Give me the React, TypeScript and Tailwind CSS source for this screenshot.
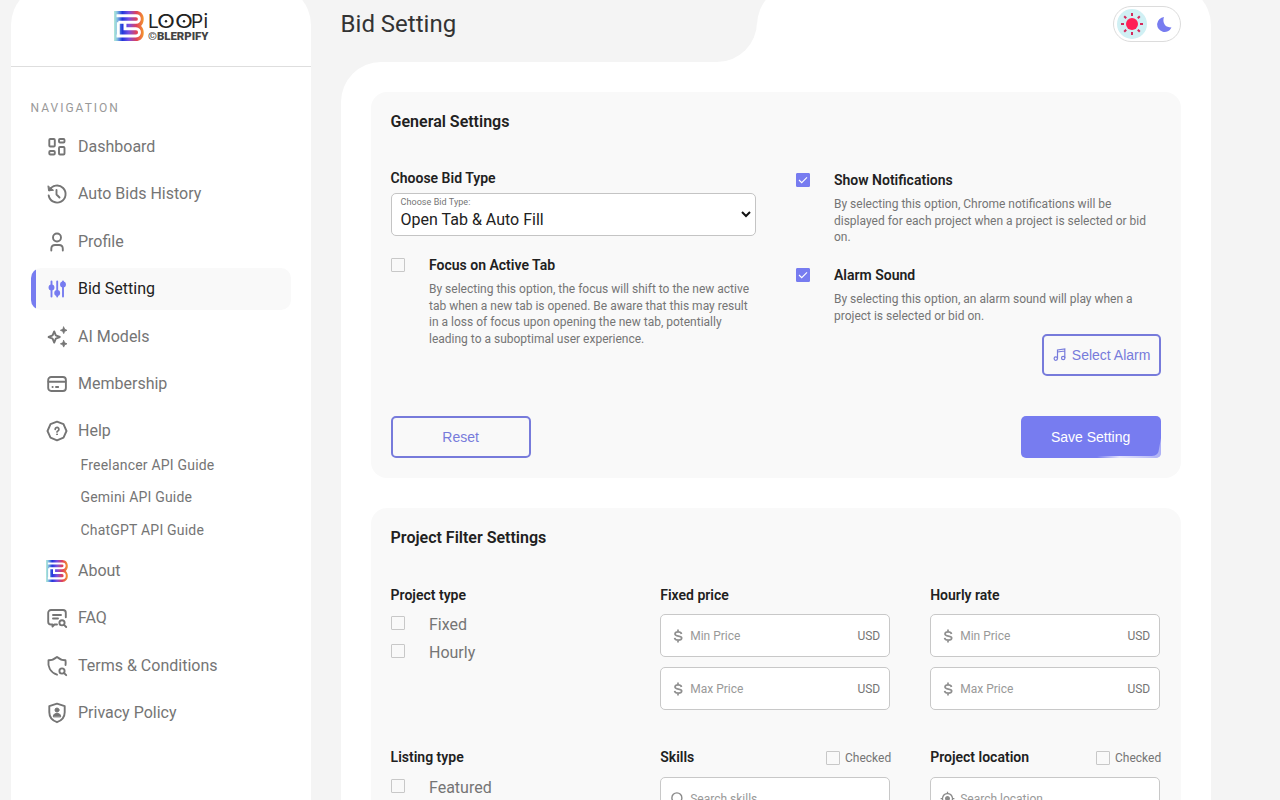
import { useState } from 'react';
import type { ReactNode } from 'react';
import { Search } from 'lucide-react';
import { MdMyLocation } from 'react-icons/md';

const navItems = [
  { label: 'Dashboard', icon: <DashboardIcon /> },
  { label: 'Auto Bids History', icon: <HistoryIcon /> },
  { label: 'Profile', icon: <ProfileIcon /> },
  { label: 'Bid Setting', icon: <SlidersIcon /> },
  { label: 'AI Models', icon: <SparkleIcon /> },
  { label: 'Membership', icon: <CardIcon /> },
  { label: 'Help', icon: <HelpIcon /> },
];

const guides = ['Freelancer API Guide', 'Gemini API Guide', 'ChatGPT API Guide'];

const footerItems = [
  { label: 'About', icon: <BrandMark size={22} id="about" /> },
  { label: 'FAQ', icon: <FaqIcon /> },
  { label: 'Terms & Conditions', icon: <TermsIcon /> },
  { label: 'Privacy Policy', icon: <PrivacyIcon /> },
];

export default function App() {
  const [active, setActive] = useState('Bid Setting');
  const [focusTab, setFocusTab] = useState(false);
  const [notify, setNotify] = useState(true);
  const [alarm, setAlarm] = useState(true);

  return (
    <div className="h-[800px] overflow-hidden bg-[#f4f4f4] font-[Roboto,sans-serif] text-[#757575]">
      <div className="ml-[11px] flex gap-[29.6px]">
        {/* Sidebar */}
        <aside className="-mt-[15px] h-[830px] w-[300px] shrink-0 rounded-t-[40px] bg-white">
          <div className="flex h-[82px] justify-center border-b border-[#dedede] pt-[26px]">
            <Logo />
          </div>
          <p className="mt-[33px] ml-[19.5px] text-xs leading-4 tracking-[2px] text-[#999]">NAVIGATION</p>
          <nav className="mt-[10px] px-5">
            {navItems.map((item) => (
              <NavItem key={item.label} {...item} active={active === item.label} onClick={() => setActive(item.label)} />
            ))}
            <ul className="-mt-[9.3px] mb-[3.8px] pl-[49.5px]">
              {guides.map((guide) => (
                <li key={guide} className="flex h-[32.5px] items-center text-sm tracking-[0.2px]">{guide}</li>
              ))}
            </ul>
            {footerItems.map((item) => (
              <NavItem key={item.label} {...item} active={active === item.label} onClick={() => setActive(item.label)} />
            ))}
          </nav>
        </aside>

        <main className="-mt-[15px] w-[870px] shrink-0">
          <header className="flex h-[77px]">
            <div className="w-[416px] bg-linear-to-r from-transparent from-50% to-white to-50%">
              <div className="flex h-full items-center rounded-br-[40px] bg-[#f4f4f4]">
                <h1 className="text-2xl leading-7 text-[#333]">Bid Setting</h1>
              </div>
            </div>
            <div className="flex flex-1 items-start justify-end rounded-t-[40px] bg-white pt-[21px] pr-[30px]">
              <ThemeSwitch />
            </div>
          </header>

          <div className="flex h-[760px] flex-col gap-[30px] rounded-tl-[40px] bg-white p-[30px]">
            <section className="h-[386px] shrink-0 rounded-2xl bg-[#f9f9f9] p-5">
              <h2 className="text-base leading-5 font-semibold text-[#212121]">General Settings</h2>
              <div className="mt-[36px] grid h-[248px] grid-cols-2 gap-10">
                <div>
                  <h3 className="text-sm leading-5 font-semibold text-[#212121]">Choose Bid Type</h3>
                  <div className="mt-[5px] flex h-[43px] items-center justify-between rounded-[5px] border border-[#c4c4c4] bg-white pr-1 pl-[9px]">
                    <div>
                      <p className="-mt-px text-[9px] leading-[10px] tracking-[0.05px]">Choose Bid Type:</p>
                      <p className="mt-[2px] text-base leading-[22px] text-[#212121]">Open Tab &amp; Auto Fill</p>
                    </div>
                    <svg width="10" height="7" viewBox="0 0 10 7" fill="none" stroke="#111" strokeWidth="2">
                      <path d="M1 1l4 4 4-4" />
                    </svg>
                  </div>
                  <div className="mt-[19px]">
                    <Option title="Focus on Active Tab" checked={focusTab} onChange={setFocusTab}>
                      By selecting this option, the focus will shift to the new active tab when a new tab is opened. Be aware
                      that this may result in a loss of focus upon opening the new tab, potentially leading to a suboptimal
                      user experience.
                    </Option>
                  </div>
                </div>
                <div className="pt-[2px]">
                  <Option title="Show Notifications" checked={notify} onChange={setNotify}>
                    By selecting this option, Chrome notifications will be displayed for each project when a project is
                    selected or bid on.
                  </Option>
                  <div className="mt-[19px]">
                    <Option title="Alarm Sound" checked={alarm} onChange={setAlarm}>
                      By selecting this option, an alarm sound will play when a project is selected or bid on.
                    </Option>
                  </div>
                  <div className="mt-[9.7px] flex justify-end">
                    <button className="flex h-[42px] w-[119px] items-center justify-center gap-[6px] rounded-[5px] border-2 border-[#777bdb] pl-px font-[Liberation_Sans,sans-serif] text-sm text-[#777bdb]">
                      <NotesIcon />
                      Select Alarm
                    </button>
                  </div>
                </div>
              </div>
              <div className="flex justify-between">
                <button className="h-[42px] w-[140px] rounded-[5px] border-2 border-[#777bdb] font-[Liberation_Sans,sans-serif] text-sm text-[#777bdb]">
                  Reset
                </button>
                <button className="relative h-[42px] w-[140px] overflow-hidden rounded-[5px] bg-[#777cf0] font-[Liberation_Sans,sans-serif] text-sm text-white">
                  Save Setting
                  <svg className="absolute right-0 bottom-0" width="64" height="24" viewBox="0 0 64 24">
                    <defs>
                      <linearGradient id="shine" x1="0" x2="1">
                        <stop offset="0" stopColor="#fff" stopOpacity="0" />
                        <stop offset=".35" stopColor="#fff" stopOpacity=".8" />
                        <stop offset="1" stopColor="#fff" stopOpacity=".4" />
                      </linearGradient>
                    </defs>
                    <path d="M0 22h55q6.500 0 7-7L64 4v20H0z" fill="url(#shine)" />
                  </svg>
                </button>
              </div>
            </section>

            <section className="h-[500px] shrink-0 rounded-2xl bg-[#f9f9f9] p-5">
              <h2 className="text-base leading-5 font-semibold text-[#212121]">Project Filter Settings</h2>
              <div className="mt-[37px] -ml-[0.4px] grid w-[770px] grid-cols-3 gap-x-10">
                <div className="h-[162px] pl-[0.4px]">
                  <FieldTitle>Project type</FieldTitle>
                  <div className="mt-2 flex flex-col gap-1">
                    <CheckRow label="Fixed" />
                    <CheckRow label="Hourly" />
                  </div>
                </div>
                <PriceGroup title="Fixed price" />
                <PriceGroup title="Hourly rate" />
                <div className="pl-[0.4px]">
                  <FieldTitle>Listing type</FieldTitle>
                  <div className="mt-[8.6px]">
                    <CheckRow label="Featured" />
                  </div>
                </div>
                <SearchGroup title="Skills" placeholder="Search skills" icon={<Search size={15} strokeWidth={2.2} />} />
                <SearchGroup title="Project location" placeholder="Search location" icon={<MdMyLocation size={15} />} />
              </div>
            </section>
          </div>
        </main>
      </div>
    </div>
  );
}

function NavItem({ label, icon, active, onClick }: { label: string; icon: ReactNode; active: boolean; onClick: () => void }) {
  return (
    <button
      onClick={onClick}
      className={`mb-[5.4px] flex h-[42px] w-full items-center gap-[10px] overflow-hidden rounded-[10px] text-base ${active ? 'bg-[#f9f9f9] text-[#212121]' : 'text-[#757575]'}`}
    >
      <span className={`h-full w-[5px] ${active ? 'bg-[#777cf0]' : ''}`} />
      <span className={`flex size-[22px] items-center justify-center ${active ? 'text-[#777cf0]' : ''}`}>{icon}</span>
      <span>{label}</span>
    </button>
  );
}

function Checkbox({ checked, onClick }: { checked?: boolean; onClick?: () => void }) {
  return (
    <button
      onClick={onClick}
      className={`flex size-[14px] shrink-0 items-center justify-center rounded-[1px] border ${checked ? 'border-[#777cf0] bg-[#777cf0]' : 'border-[#c8c8c8]'}`}
    >
      {checked && (
        <svg width="10" height="10" viewBox="0 0 10 10" fill="none" stroke="white" strokeWidth="1.100" className="shrink-0">
          <path d="M1 5l2.700 2.700L9 2.300" />
        </svg>
      )}
    </button>
  );
}

function Option({ title, checked, onChange, children }: { title: string; checked: boolean; onChange: (v: boolean) => void; children: ReactNode }) {
  return (
    <div className="flex gap-[24.4px]">
      <div className="pt-[3px]">
        <Checkbox checked={checked} onClick={() => onChange(!checked)} />
      </div>
      <div>
        <h3 className="text-sm leading-5 font-semibold text-[#212121]">{title}</h3>
        <p className="mt-[6px] -mr-px text-xs leading-[16.65px]">{children}</p>
      </div>
    </div>
  );
}

function FieldTitle({ children }: { children: ReactNode }) {
  return <h3 className="text-sm leading-5 font-semibold text-[#212121]">{children}</h3>;
}

function CheckRow({ label }: { label: string }) {
  const [checked, setChecked] = useState(false);
  return (
    <div className="flex h-6 gap-[24.4px]">
      <div className="pt-[3px]">
        <Checkbox checked={checked} onClick={() => setChecked(!checked)} />
      </div>
      <span className="text-base leading-6">{label}</span>
    </div>
  );
}

function PriceGroup({ title }: { title: string }) {
  return (
    <div>
      <FieldTitle>{title}</FieldTitle>
      <div className="mt-[9px] flex flex-col gap-[10px]">
        {['Min Price', 'Max Price'].map((placeholder) => (
          <div key={placeholder} className="flex h-[43px] items-center rounded-[5px] border border-[#c8c8c8] bg-white px-[9px]">
            <DollarIcon />
            <input placeholder={placeholder} className="ml-1 w-0 flex-1 text-xs outline-none placeholder:text-[#999]" />
            <span className="text-xs">USD</span>
          </div>
        ))}
      </div>
    </div>
  );
}

function SearchGroup({ title, placeholder, icon }: { title: string; placeholder: string; icon: ReactNode }) {
  return (
    <div>
      <div className="flex items-center justify-between">
        <FieldTitle>{title}</FieldTitle>
        <div className="flex items-center gap-[5px] pt-px">
          <Checkbox />
          <span className="-mr-px text-xs">Checked</span>
        </div>
      </div>
      <div className="mt-[10px] flex h-[43px] items-center rounded-[5px] border border-[#c8c8c8] bg-white px-[9px]">
        <span className="text-[#8a8a8a]">{icon}</span>
        <input placeholder={placeholder} className="ml-[5px] w-0 flex-1 text-xs outline-none placeholder:text-[#999]" />
      </div>
    </div>
  );
}

function ThemeSwitch() {
  return (
    <div className="flex h-9 w-[68px] items-center gap-[10px] rounded-full border border-[#dcdcdc] pl-[3px]">
      <span className="flex size-[30px] items-center justify-center rounded-full bg-[#d0f0f4]">
        <svg width="24" height="24" viewBox="0 0 24 24" stroke="#d42a5c" strokeWidth="2">
          <circle cx="12" cy="12" r="6" fill="#ff2156" stroke="none" />
          <path d="M12 1v3M12 20v3M1 12h3M20 12h3M4.200 4.200l2 2M17.800 17.800l2 2M4.200 19.800l2-2M17.800 6.200l2-2" />
        </svg>
      </span>
      <svg width="15" height="15" viewBox="0 0 15 15" fill="#777cf0">
        <path d="M7 0C5.500 4 6.500 10.500 14.500 10.500A7.500 7.500 0 1 1 7 0z" />
      </svg>
    </div>
  );
}

function Logo() {
  return (
    <svg width="96" height="32" viewBox="0 0 96 32" className="translate-x-px">
      <BrandShape id="logo" />
      <g fill="#222" fontFamily="Inter, sans-serif" fontWeight="400" fontSize="19">
        <text x="34" y="17">L</text>
        <text x="43" y="17" textLength="18" lengthAdjust="spacingAndGlyphs">O</text>
        <text x="61" y="17" textLength="18" lengthAdjust="spacingAndGlyphs">O</text>
        <text x="77" y="17">P</text>
        <text x="89.500" y="17">i</text>
        <circle cx="52" cy="10.200" r="1.200" />
        <circle cx="70" cy="10.200" r="1.200" />
      </g>
      <text x="34" y="28.800" fill="#444" fontFamily="Roboto, sans-serif" fontWeight="900" fontSize="11" textLength="60.500" lengthAdjust="spacingAndGlyphs">
        ©BLERPIFY
      </text>
    </svg>
  );
}

function BrandMark({ size, id }: { size: number; id: string }) {
  return (
    <svg width={size} height={size} viewBox="0 0 30 30">
      <BrandShape id={id} />
    </svg>
  );
}

function BrandShape({ id }: { id: string }) {
  return (
    <g>
      <defs>
        <linearGradient id={id} x1="0" x2="1">
          <stop offset="0" stopColor="#b4ead8" />
          <stop offset=".1" stopColor="#86c4e0" />
          <stop offset=".28" stopColor="#2038dc" />
          <stop offset=".5" stopColor="#7a4fe0" />
          <stop offset=".75" stopColor="#e0405a" />
          <stop offset="1" stopColor="#f59a2c" />
        </linearGradient>
      </defs>
      <path d="M0 0h22c9 0 9.500 11 5 15 4.500 4 4 15-5 15H0z" fill={`url(#${id})`} />
      <path
        d="M2.500 4.700H22c4.500 0 4.500 6.600 0 6.600H4.300M2.500 25H22c4.700 0 4.700-7.300 0-7.300H11V11.300M4.300 11.300V25"
        fill="none"
        stroke="#fff"
        strokeWidth="2.900"
      />
    </g>
  );
}

function Icon({ children }: { children: ReactNode }) {
  return (
    <svg width="22" height="22" viewBox="0 0 22 22" fill="none" stroke="currentColor" strokeWidth="1.900" strokeLinecap="round" strokeLinejoin="round" className="shrink-0">
      {children}
    </svg>
  );
}

function DashboardIcon() {
  return (
    <Icon>
      <rect x="3.300" y="3" width="5.500" height="7.500" rx="1" />
      <rect x="13" y="3" width="5.500" height="3.500" rx="1" />
      <rect x="3.300" y="15" width="5.500" height="3.500" rx="1" />
      <rect x="13" y="11" width="5.500" height="7.500" rx="1" />
    </Icon>
  );
}

function HistoryIcon() {
  return (
    <Icon>
      <path d="M3.500 7.200A8.500 8.500 0 1 1 2.700 12.500M10.500 7v4.500l3 3" />
      <path d="M2 3.200l.600 4.600 4.600-.500z" fill="currentColor" strokeWidth="1" />
    </Icon>
  );
}

function ProfileIcon() {
  return (
    <Icon>
      <circle cx="11" cy="6.500" r="4" />
      <path d="M5.300 19.500v-1.700c0-2.300 1.500-3.800 3.800-3.800h4c2.300 0 3.700 1.500 3.700 3.800v1.700" />
    </Icon>
  );
}

function SlidersIcon() {
  return (
    <Icon>
      <path d="M5.500 3.500v15M11.200 3.500v15M17 3.500v15" />
      <circle cx="5.500" cy="9.500" r="2" fill="currentColor" />
      <circle cx="11.200" cy="15" r="2" fill="currentColor" />
      <circle cx="17" cy="6.500" r="2" fill="currentColor" />
    </Icon>
  );
}

function SparkleIcon() {
  return (
    <Icon>
      <path d="M8.200 5.400l1.600 4 4 1.600-4 1.600-1.600 4-1.600-4-4-1.600 4-1.600z" />
      <path d="M17.700 1l1 2.300 2.300 1-2.300 1-1 2.300-1-2.300-2.300-1 2.300-1zM17.700 14.500l1 2.300 2.300 1-2.300 1-1 2.300-1-2.300-2.300-1 2.300-1z" fill="currentColor" strokeWidth="0.800" />
    </Icon>
  );
}

function CardIcon() {
  return (
    <Icon>
      <rect x="2.200" y="4" width="17.700" height="14" rx="3" />
      <path d="M2.500 8.800h17M6.500 14h.200M10 14h2.200" />
    </Icon>
  );
}

function HelpIcon() {
  return (
    <Icon>
      <path d="M11 1.600l6.500 2.500 3 6.900-3 6.700-6.500 2.700-6.500-2.700-3-6.700 3-6.900z" />
      <path d="M9.200 9.400a1.850 1.850 0 1 1 2.900 1.400c-.8.500-1.100.7-1.100 1.200" strokeWidth="1.700" />
      <circle cx="11" cy="14.300" r=".500" fill="currentColor" strokeWidth="1" />
    </Icon>
  );
}

function FaqIcon() {
  return (
    <Icon>
      <path d="M11 17.500H8.500l-2 2v-2H5a2.800 2.800 0 0 1-2.800-2.800V5.800A2.800 2.800 0 0 1 5 3h12a2.800 2.800 0 0 1 2.800 2.800v4.500M7 8h8M7 11.500h5" />
      <circle cx="16" cy="15.800" r="2.600" />
      <path d="M18 17.800l2.200 2.200" />
    </Icon>
  );
}

function TermsIcon() {
  return (
    <Icon>
      <path d="M19.500 10c.2-1.500.2-3.300 0-4.700-3.300 0-6-1.200-8.500-3.300C8.500 4.100 5.800 5.300 2.500 5.300c-.8 6 1.500 12 8.500 14.400" />
      <circle cx="16" cy="16" r="2.600" />
      <path d="M18 18l2.200 2.200" />
    </Icon>
  );
}

function PrivacyIcon() {
  return (
    <Icon>
      <path d="M11 1.700l7.700 2.500v6c0 5-3.200 8.300-7.700 10-4.500-1.700-7.700-5-7.700-10v-6z" />
      <circle cx="11" cy="8" r="2" fill="currentColor" strokeWidth="1" />
      <path d="M7.300 14.500c0-2.500 2-3.200 3.700-3.200s3.700.7 3.700 3.200z" fill="currentColor" strokeWidth="1" />
    </Icon>
  );
}

function DollarIcon() {
  return (
    <svg width="16" height="16" viewBox="0 0 16 16" fill="none" stroke="#8f8f8f" strokeWidth="1.700">
      <path d="M8 1.500v2.300M8 12.200v2.300M11.500 6c-.3-1.400-1.500-2.100-3.300-2.100-2 0-3.200.8-3.200 2.100 0 3.100 6.700 1 6.700 4.100 0 1.400-1.300 2.100-3.400 2.100-2.200 0-3.500-.8-3.700-2.300" />
    </svg>
  );
}

function NotesIcon() {
  return (
    <svg width="13" height="13" viewBox="0 0 13 13" fill="none" stroke="currentColor" strokeWidth="1.200">
      <path d="M4.500 10.500V2l7.300-1v9M4.500 4l7.300-1" />
      <circle cx="2.800" cy="10.600" r="1.700" />
      <circle cx="10.200" cy="10" r="1.700" />
    </svg>
  );
}
